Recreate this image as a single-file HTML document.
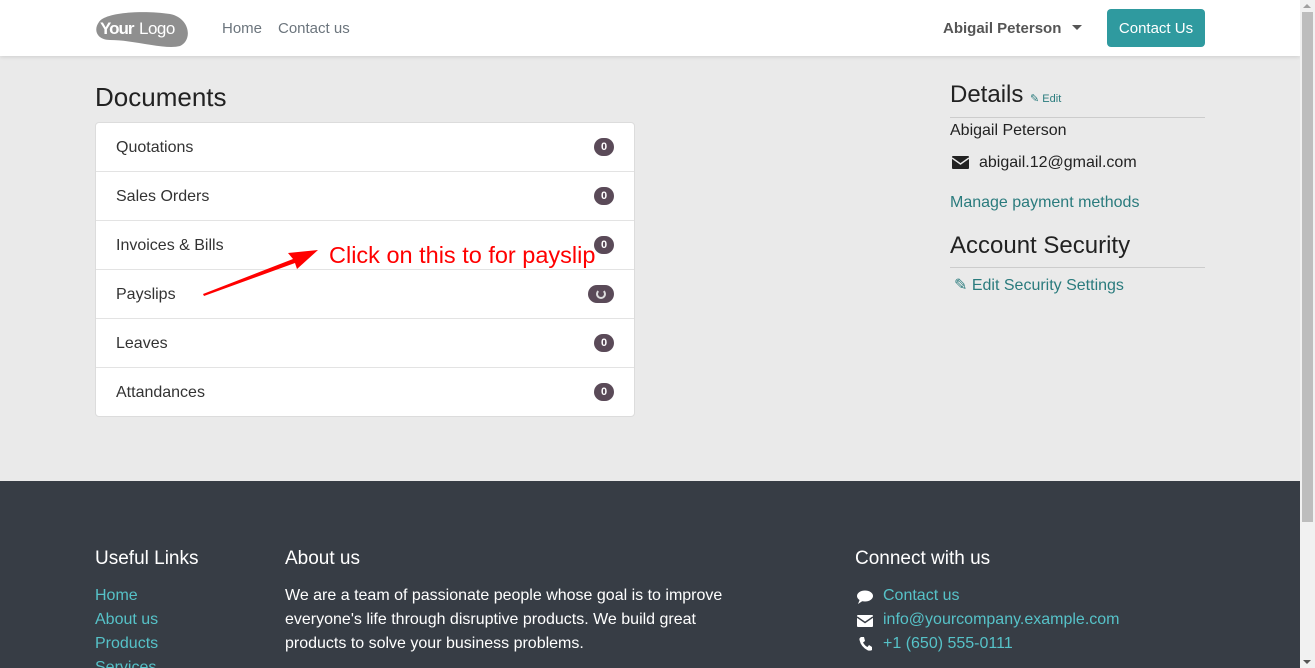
<!DOCTYPE html>
<html style="overflow:hidden;height:668px"><head><meta charset="utf-8"><style>
*{box-sizing:border-box;margin:0;padding:0}
body{width:1315px;height:668px;overflow:hidden;background:#f1f1f1;font-family:"Liberation Sans",sans-serif;position:relative}
#page{position:absolute;left:0;top:0;width:1300px;height:668px;background:#eaeaea;overflow:hidden}
header{position:absolute;left:0;top:0;width:1300px;height:56px;background:#fff;box-shadow:0 1px 4px rgba(0,0,0,.12)}
.nav{position:absolute;top:20px;font-size:15px;color:#6c757d}
.btn{position:absolute;left:1107px;top:9px;width:98px;height:38px;background:#2f9a9f;color:#fff;border-radius:4px;font-size:15px;line-height:39px;text-align:center}
h2{position:absolute;font-weight:400;color:#222;}
.card{position:absolute;left:95px;top:122px;width:540px;height:295px;background:#fff;border:1px solid #dcdcdc;border-radius:4px}
.row{height:49px;border-bottom:1px solid #e3e3e3;position:relative;font-size:16px;color:#333;padding-left:20px;line-height:50px}
.row:last-child{border-bottom:none}
.badge{position:absolute;right:20px;top:15px;width:20px;height:18px;border-radius:9px;background:#5a4a58;color:#fff;font-size:11px;font-weight:bold;line-height:18px;text-align:center}
.teal{color:#2a7b7d}
footer{position:absolute;left:0;top:481px;width:1300px;height:187px;background:#373d45;color:#fff}
footer h4{position:absolute;top:67px;font-weight:400;font-size:19px}
footer a{color:#56c2c8;text-decoration:none}
.lk{position:absolute;font-size:16px;line-height:24px}
.ic{position:absolute;left:857px}
</style></head><body>
<div id="page">
<header>
<svg style="position:absolute;left:95px;top:10px" width="96" height="38" viewBox="0 0 96 38"><path d="M4 12 C10 2 50 0 75 4 C95 8 98 30 85 36 C70 40 40 30 15 30 C2 30 -2 20 4 12Z" fill="#8f8f8f"/><text x="5" y="24" font-family="Liberation Sans" font-weight="bold" font-size="17" fill="#fff" letter-spacing="-1">Your</text><text x="44" y="24" font-family="Liberation Sans" font-size="17" fill="#fff" letter-spacing="-0.5">Logo</text></svg>
<div class="nav" style="left:222px">Home</div>
<div class="nav" style="left:278px">Contact us</div>
<div class="nav" style="left:943px;color:#555;font-weight:bold">Abigail Peterson <span style="display:inline-block;margin-left:6px;border:5px solid transparent;border-top-color:#555;border-bottom:0;vertical-align:3px"></span></div>
<div class="btn">Contact Us</div>
</header>

<h2 style="left:95px;top:82px;font-size:26px">Documents</h2>
<div class="card">
<div class="row">Quotations<span class="badge">0</span></div>
<div class="row">Sales Orders<span class="badge">0</span></div>
<div class="row">Invoices &amp; Bills<span class="badge">0</span></div>
<div class="row">Payslips<span class="badge" style="width:26px;right:20px"><span style="display:inline-block;width:10px;height:10px;border:2px solid #ddd;border-top-color:transparent;border-radius:50%;margin-top:4px"></span></span></div>
<div class="row">Leaves<span class="badge">0</span></div>
<div class="row">Attandances<span class="badge">0</span></div>
</div>
<svg style="position:absolute;left:200px;top:245px" width="120" height="55"><path d="M4 51 L95 18 L97 24 L118 5 L88 8 L93 14 L3 49Z" fill="#f00"/></svg>
<div style="position:absolute;left:329px;top:242px;font-size:23.5px;color:#f00">Click on this to for payslip</div>

<h2 style="left:950px;top:81px;font-size:24px">Details <span class="teal" style="font-size:11px">&#9998; Edit</span></h2>
<div style="position:absolute;left:950px;top:117px;width:255px;border-top:1px solid #ccc"></div>
<div style="position:absolute;left:950px;top:122px;font-size:16px;color:#222">Abigail Peterson</div>
<svg style="position:absolute;left:952px;top:156px" width="17" height="13"><rect width="17" height="13" rx="1" fill="#222"/><path d="M0 2 L8.5 8 L17 2" stroke="#eaeaea" stroke-width="1.5" fill="none"/></svg>
<div style="position:absolute;left:979px;top:154px;font-size:16px;color:#222">abigail.12@gmail.com</div>
<div class="teal" style="position:absolute;left:950px;top:194px;font-size:16px">Manage payment methods</div>
<h2 style="left:950px;top:232px;font-size:24px">Account Security</h2>
<div style="position:absolute;left:950px;top:267px;width:255px;border-top:1px solid #ccc"></div>
<div class="teal" style="position:absolute;left:954px;top:275px;font-size:16px">&#9998; Edit Security Settings</div>

<footer>
<h4 style="left:95px">Useful Links</h4>
<h4 style="left:285px">About us</h4>
<h4 style="left:855px">Connect with us</h4>
<div class="lk" style="left:95px;top:103px"><a>Home</a><br><a>About us</a><br><a>Products</a><br><a>Services</a></div>
<div class="lk" style="left:285px;top:103px;width:460px">We are a team of passionate people whose goal is to improve everyone's life through disruptive products. We build great products to solve your business problems.</div>
<svg class="ic" style="top:109px" width="16" height="14"><ellipse cx="8" cy="6" rx="8" ry="5.5" fill="#fff"/><path d="M3 9 L1 14 L7 10Z" fill="#fff"/></svg>
<svg class="ic" style="top:134px" width="16" height="12"><rect width="16" height="12" rx="1" fill="#fff"/><path d="M0 2 L8 7.5 L16 2" stroke="#373d45" stroke-width="1.5" fill="none"/></svg>
<svg class="ic" style="top:156px;left:859px" width="13" height="14"><path d="M2 0 L5 0 L6 4 L4 5.5 Q6 9 8.5 10 L10 8 L13 10 L13 13 Q12 14 9 13.5 Q2 10 0.5 3 Q0 1 2 0Z" fill="#fff"/></svg>
<div class="lk" style="left:883px;top:103px"><a>Contact us</a><br><a>info@yourcompany.example.com</a><br><a>+1 (650) 555-0111</a></div>
</footer>
</div>
<div style="position:absolute;left:1302px;top:12px;width:11px;height:510px;background:#bdbdbd"></div>
<div style="position:absolute;left:1303px;top:4px;border:4px solid transparent;border-bottom-color:#a0a0a0;border-top:0"></div>
<div style="position:absolute;left:1303px;top:660px;border:4px solid transparent;border-top-color:#555;border-bottom:0"></div>
</body></html>
